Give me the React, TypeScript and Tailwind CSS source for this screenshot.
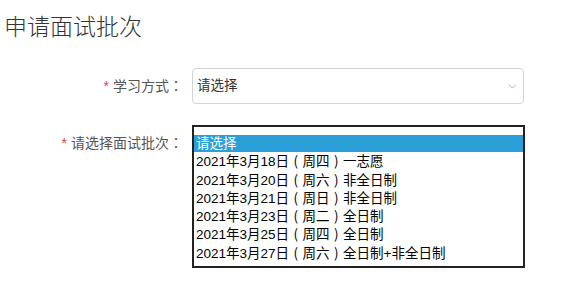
import { ChevronDown } from "lucide-react";

const batches = [
    "2021年3月18日（周四）一志愿",
    "2021年3月20日（周六）非全日制",
    "2021年3月21日（周日）非全日制",
    "2021年3月23日（周二）全日制",
    "2021年3月25日（周四）全日制",
    "2021年3月27日（周六）全日制+非全日制",
];

const font = "font-['Liberation_Sans','Noto_Sans_CJK_SC',sans-serif]";

// fullwidth punctuation centred in its box, as on the original page
function Punct({ text }: { text: string }) {
    const parts = text.split(/([（）：])/);
    return (
        <>
            {parts.map((p, i) => {
                if (p === "：")
                    return (
                        <span key={i} className="font-['Noto_Sans_CJK_TC',sans-serif]">
                            ：
                        </span>
                    );
                if (p === "（" || p === "）")
                    return (
                        <span key={i} className="inline-block w-[1em] text-center font-['Noto_Sans_CJK_SC',sans-serif]">
                            {p === "（" ? "(" : ")"}
                        </span>
                    );
                return p;
            })}
        </>
    );
}

export default function App() {
    return (
        <div className={`h-[289px] w-[570px] overflow-hidden bg-white ${font}`}>
            <h1 className="pl-[4px] pt-[11px] text-[23px] leading-[32px] font-light text-[#333]">申请面试批次</h1>

            <div className="mt-[25px] flex items-center">
                <label className="w-[186px] shrink-0 pr-[3px] text-right text-[14px] text-[#555]">
                    <span className="mr-[4px] text-[#e4393c]">*</span>
                    <Punct text="学习方式：" />
                </label>
                <div className="ml-[6px] flex h-[36px] w-[332px] items-center justify-between rounded-[4px] border border-[#d4d4d4] pl-[4px] pr-[4px]">
                    <span className="text-[13.5px] text-[#333]">请选择</span>
                    <ChevronDown size={13} strokeWidth={1.2} className="text-[#888]" />
                </div>
            </div>

            <div className="mt-[21px] flex items-start">
                <label className="w-[186px] shrink-0 pt-[9px] pr-[3px] text-right text-[14px] leading-[17px] text-[#555]">
                    <span className="mr-[4px] text-[#e4393c]">*</span>
                    <Punct text="请选择面试批次：" />
                </label>
                <div className="ml-[6px] h-[143px] w-[333px] border-2 border-[#222] pt-[8px]">
                    <div className="bg-[#2a9fd8] pl-[2px] text-[13.5px] leading-[17.3px] text-white">请选择</div>
                    {batches.map((b) => (
                        <div key={b} className="pl-[2px] text-[13.5px] leading-[17.3px] text-black">
                            <Punct text={b} />
                        </div>
                    ))}
                </div>
            </div>
        </div>
    );
}
